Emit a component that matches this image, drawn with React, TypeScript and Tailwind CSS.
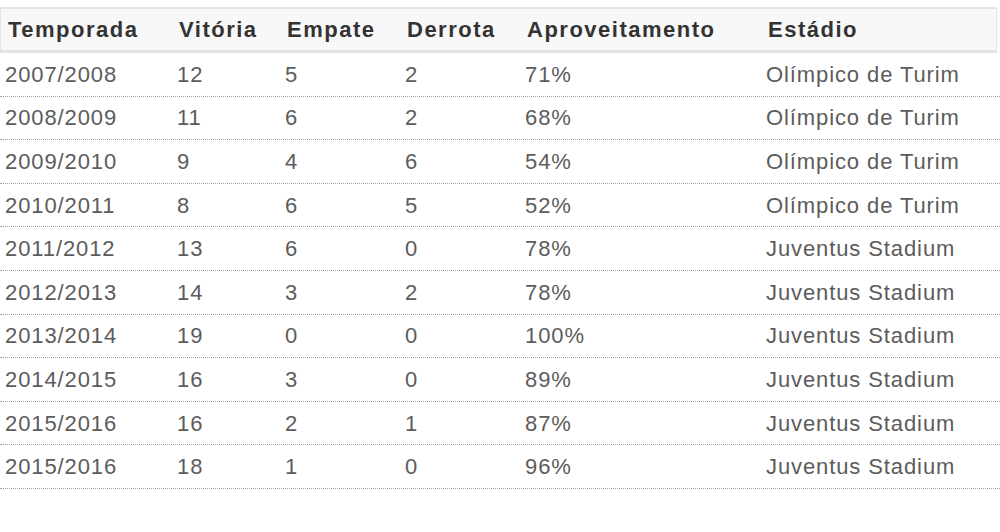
const rows = [
  ["2007/2008", "12", "5", "2", "71%", "Olímpico de Turim"],
  ["2008/2009", "11", "6", "2", "68%", "Olímpico de Turim"],
  ["2009/2010", "9", "4", "6", "54%", "Olímpico de Turim"],
  ["2010/2011", "8", "6", "5", "52%", "Olímpico de Turim"],
  ["2011/2012", "13", "6", "0", "78%", "Juventus Stadium"],
  ["2012/2013", "14", "3", "2", "78%", "Juventus Stadium"],
  ["2013/2014", "19", "0", "0", "100%", "Juventus Stadium"],
  ["2014/2015", "16", "3", "0", "89%", "Juventus Stadium"],
  ["2015/2016", "16", "2", "1", "87%", "Juventus Stadium"],
  ["2015/2016", "18", "1", "0", "96%", "Juventus Stadium"],
];

const headers = ["Temporada", "Vitória", "Empate", "Derrota", "Aproveitamento", "Estádio"];

const cols = "grid grid-cols-[171px_108px_120px_120px_241px_1fr]";

export default function App() {
  return (
    <div className="h-[532px] w-[1000px] bg-white pt-[7px] font-['Liberation_Sans',Arial,sans-serif]">
      <div
        className={`${cols} mr-[3px] h-[46px] items-center border-x border-t-2 border-b-[3px] border-[#e4e4e4] bg-[#f8f8f8] text-[22px] font-bold tracking-[1.5px] text-[#333]`}
      >
        {headers.map((h) => (
          <div key={h} className="pl-[7px]">
            {h}
          </div>
        ))}
      </div>
      {rows.map((r, i) => (
        <div
          key={i}
          className={`${cols} h-[43.6px] items-center border-b border-dotted border-[#a0a0a0] text-[22px] tracking-[0.9px] text-[#5c5c5c]`}
        >
          {r.map((c, j) => (
            <div key={j} className={j === 0 ? "pl-[5px]" : "pl-[6px]"}>
              {c}
            </div>
          ))}
        </div>
      ))}
    </div>
  );
}
